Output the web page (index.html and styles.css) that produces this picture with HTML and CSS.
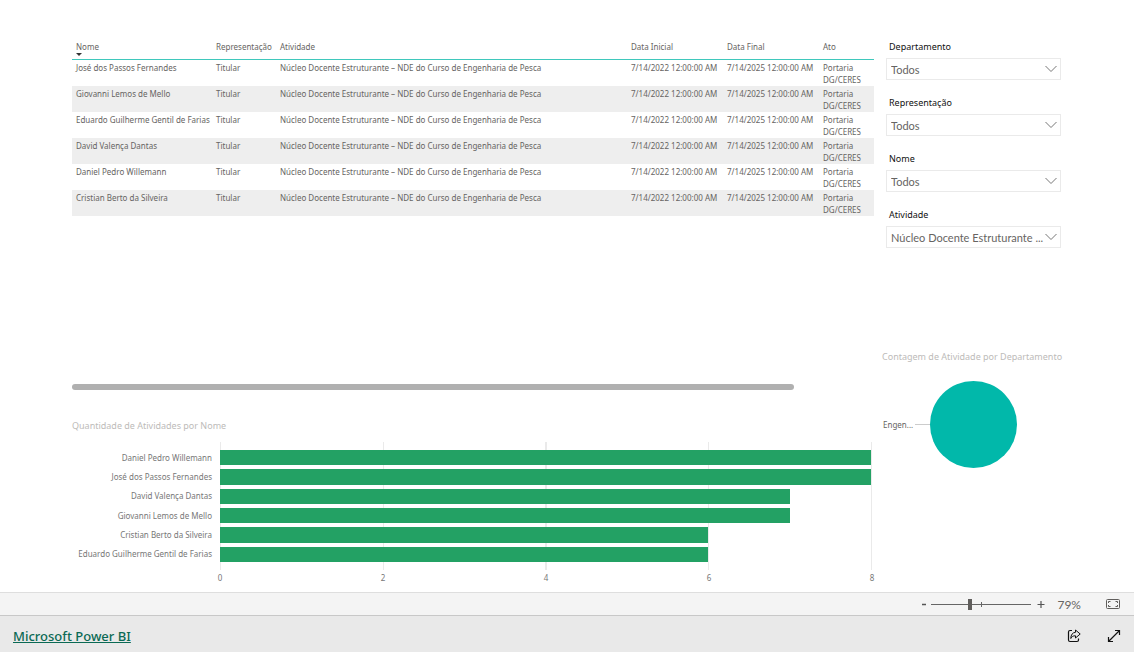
FILE: index.html
```html
<!DOCTYPE html>
<html lang="pt-BR">
<head>
<meta charset="utf-8">
<meta name="viewport" content="width=device-width, initial-scale=1">
<title>Microsoft Power BI</title>
<link rel="stylesheet" href="styles.css">
</head>
<body>
<main class="report">
  <div class="report-main">
    <section class="table-visual">
      <table class="data-table">
        <colgroup><col class="col-name"><col class="col-role"><col><col class="col-date"><col class="col-date"><col class="col-act"></colgroup>
        <thead>
          <tr><th class="sorted" aria-sort="descending">Nome</th><th>Representação</th><th>Atividade</th><th>Data Inicial</th><th>Data Final</th><th>Ato</th></tr>
        </thead>
        <tbody>
          <tr><td>José dos Passos Fernandes</td><td>Titular</td><td>Núcleo Docente Estruturante – NDE do Curso de Engenharia de Pesca</td><td>7/14/2022 12:00:00 AM</td><td>7/14/2025 12:00:00 AM</td><td>Portaria<br>DG/CERES</td></tr>
          <tr><td>Giovanni Lemos de Mello</td><td>Titular</td><td>Núcleo Docente Estruturante – NDE do Curso de Engenharia de Pesca</td><td>7/14/2022 12:00:00 AM</td><td>7/14/2025 12:00:00 AM</td><td>Portaria<br>DG/CERES</td></tr>
          <tr><td>Eduardo Guilherme Gentil de Farias</td><td>Titular</td><td>Núcleo Docente Estruturante – NDE do Curso de Engenharia de Pesca</td><td>7/14/2022 12:00:00 AM</td><td>7/14/2025 12:00:00 AM</td><td>Portaria<br>DG/CERES</td></tr>
          <tr><td>David Valença Dantas</td><td>Titular</td><td>Núcleo Docente Estruturante – NDE do Curso de Engenharia de Pesca</td><td>7/14/2022 12:00:00 AM</td><td>7/14/2025 12:00:00 AM</td><td>Portaria<br>DG/CERES</td></tr>
          <tr><td>Daniel Pedro Willemann</td><td>Titular</td><td>Núcleo Docente Estruturante – NDE do Curso de Engenharia de Pesca</td><td>7/14/2022 12:00:00 AM</td><td>7/14/2025 12:00:00 AM</td><td>Portaria<br>DG/CERES</td></tr>
          <tr><td>Cristian Berto da Silveira</td><td>Titular</td><td>Núcleo Docente Estruturante – NDE do Curso de Engenharia de Pesca</td><td>7/14/2022 12:00:00 AM</td><td>7/14/2025 12:00:00 AM</td><td>Portaria<br>DG/CERES</td></tr>
        </tbody>
      </table>
      <div class="scroll-thumb"></div>
    </section>

    <section class="bar-visual">
      <h2 class="visual-title">Quantidade de Atividades por Nome</h2>
      <div class="chart">
        <ul class="chart-names">
          <li>Daniel Pedro Willemann</li><li>José dos Passos Fernandes</li><li>David Valença Dantas</li><li>Giovanni Lemos de Mello</li><li>Cristian Berto da Silveira</li><li>Eduardo Guilherme Gentil de Farias</li>
        </ul>
        <div class="plot">
          <div class="bar" style="width:100%"></div>
          <div class="bar" style="width:100%"></div>
          <div class="bar" style="width:87.5%"></div>
          <div class="bar" style="width:87.5%"></div>
          <div class="bar" style="width:75%"></div>
          <div class="bar" style="width:75%"></div>
        </div>
        <div class="axis"><span>0</span><span>2</span><span>4</span><span>6</span><span>8</span></div>
      </div>
    </section>
  </div>

  <aside class="report-side">
    <div class="filters">
      <div class="filter">
        <label for="f-dep">Departamento</label>
        <div class="select-box"><select id="f-dep"><option>Todos</option></select><svg class="chevron" viewBox="0 0 12 8"><path d="M.5 1L6 6.500 11.500 1"/></svg></div>
      </div>
      <div class="filter">
        <label for="f-rep">Representação</label>
        <div class="select-box"><select id="f-rep"><option>Todos</option></select><svg class="chevron" viewBox="0 0 12 8"><path d="M.5 1L6 6.500 11.500 1"/></svg></div>
      </div>
      <div class="filter">
        <label for="f-nome">Nome</label>
        <div class="select-box"><select id="f-nome"><option>Todos</option></select><svg class="chevron" viewBox="0 0 12 8"><path d="M.5 1L6 6.500 11.500 1"/></svg></div>
      </div>
      <div class="filter">
        <label for="f-ativ">Atividade</label>
        <div class="select-box"><select id="f-ativ"><option>Núcleo Docente Estruturante ...</option></select><svg class="chevron" viewBox="0 0 12 8"><path d="M.5 1L6 6.500 11.500 1"/></svg></div>
      </div>
    </div>
    <section class="pie-visual">
      <h2 class="visual-title">Contagem de Atividade por Departamento</h2>
      <div class="pie-row"><span class="pie-label">Engen...</span><span class="pie-leader"></span><span class="pie"></span></div>
    </section>
  </aside>
</main>

<div class="zoom-bar">
  <button class="zoom-step" type="button" aria-label="Diminuir zoom"><svg width="6" height="12" viewBox="0 0 6 12"><path d="M1 6.500h4" stroke="#555" stroke-width="1.500"/></svg></button>
  <input class="zoom-range" type="range" min="0" max="100" value="38" aria-label="Zoom">
  <button class="zoom-step" type="button" aria-label="Aumentar zoom"><svg width="8" height="12" viewBox="0 0 8 12"><path d="M.5 6.500h7M4 3v7" stroke="#555" stroke-width="1.200"/></svg></button>
  <button class="zoom-value" type="button">79%</button>
  <button class="zoom-fit" type="button" aria-label="Ajustar à página"><svg width="14" height="12" viewBox="0 0 14 12" fill="none" stroke="#605e5c"><rect x=".5" y="1.500" width="13" height="9" rx="1"/><path d="M4.500 3.500h-2V5M9.500 3.500h2V5M4.500 8.500h-2V7M9.500 8.500h2V7"/></svg></button>
</div>

<footer class="brand-bar">
  <a class="brand-link" href="#">Microsoft Power BI</a>
  <div class="brand-actions">
    <button type="button" aria-label="Compartilhar"><svg width="14" height="14" viewBox="0 0 14 14" fill="none" stroke="#111" stroke-linejoin="round"><path stroke-width="1.200" d="M5 1.500H3Q1.500 1.500 1.500 3v8q0 1.500 1.500 1.500h7Q11.500 12.500 11.500 11V9.500"/><path d="M8.500 1l4.700 4-4.700 4V6.800C6 6.700 4.800 7.600 3.800 9.500 3.900 5.800 5.500 3.500 8.500 3.300z"/></svg></button>
    <button type="button" aria-label="Tela cheia"><svg width="14" height="14" viewBox="0 0 14 14" fill="none" stroke="#111" stroke-width="1.200"><path d="M1.500 12.500l11-11M8 1.500h4.500V6M1.500 8v4.500H6"/></svg></button>
  </div>
</footer>
</body>
</html>
```
FILE: styles.css
```css
* { box-sizing: border-box; }

body {
  margin: 0;
  min-height: 100vh;
  display: flex;
  flex-direction: column;
  background: #fff;
  color: #666462;
  font-family: "Noto Sans", "Open Sans", sans-serif;
  font-size: 8px;
  line-height: 12px;
}

button {
  display: flex;
  align-items: center;
  padding: 0;
  border: 0;
  background: none;
  color: inherit;
  font: inherit;
}

.report {
  flex: 1;
  display: grid;
  grid-template-columns: minmax(0, 1fr) 175px;
  gap: 12px;
  padding: 39px 73px 8px 72px;
}

.report-main { display: flex; flex-direction: column; }

.table-visual {
  display: flex;
  flex-direction: column;
  justify-content: space-between;
  min-height: 351px;
}

.data-table {
  width: 100%;
  table-layout: fixed;
  border-collapse: separate;
  border-spacing: 0;
}
.col-name { width: 140px; }
.col-role { width: 64px; }
.col-date { width: 96px; }
.col-act { width: 55px; }

.data-table th {
  height: 21px;
  padding: 2px 4px 0;
  border-bottom: 1px solid #3fc8bc;
  font-weight: 400;
  text-align: left;
  vertical-align: top;
  white-space: nowrap;
}
.data-table td {
  padding: 2px 4px 0;
  vertical-align: top;
  white-space: nowrap;
}
.data-table tbody tr:nth-child(even) { background: #eee; }
.sorted::after {
  content: "";
  display: block;
  width: 0;
  border: 3px solid transparent;
  border-top-color: #333;
  border-bottom: 0;
}

.scroll-thumb {
  width: 90%;
  height: 6px;
  border-radius: 3px;
  background: #b0b0b0;
}

.visual-title {
  margin: 0;
  color: #bdbbb9;
  font-size: 9px;
  font-weight: 400;
  line-height: 16px;
  white-space: nowrap;
}

.bar-visual { padding-top: 28px; }
.chart {
  display: grid;
  grid-template-columns: 148px 1fr;
  margin: 8px 2px 0 0;
}
.chart-names, .plot {
  display: grid;
  grid-template-rows: repeat(6, 1fr);
  height: 128px;
  padding: 6px 0;
}
.chart-names {
  margin: 0;
  padding-right: 8px;
  align-items: center;
  color: #777;
  list-style: none;
  text-align: right;
}
.plot {
  border-right: 1px solid #eaeaea;
  background: repeating-linear-gradient(to right, #eaeaea 0 1px, transparent 1px 25%);
}
.bar { margin: 2px 0; background: #23a164; }
.axis {
  grid-column: 2;
  display: flex;
  justify-content: space-between;
  margin: 2px -4px 0;
  color: #777;
}
.axis span { width: 8px; text-align: center; }

.filters { display: flex; flex-direction: column; gap: 15px; }
.filter label {
  display: block;
  padding: 0 3px;
  color: #111;
  font-size: 9px;
  line-height: 16px;
}
.select-box { position: relative; margin-top: 3px; }
.select-box select {
  display: block;
  width: 100%;
  height: 22px;
  padding: 0 16px 0 4px;
  border: 1px solid #eaeaea;
  border-radius: 0;
  appearance: none;
  background: #fff;
  color: #666462;
  font: 11px Lato, "Open Sans", sans-serif;
}
.chevron {
  position: absolute;
  top: 7px;
  right: 4px;
  width: 12px;
  height: 8px;
  fill: none;
  stroke: #777;
  pointer-events: none;
}

.pie-visual { margin-top: 101px; }
.pie-visual .visual-title { margin-left: -4px; }
.pie-row {
  display: flex;
  align-items: center;
  margin: 16px 0 0 -3px;
}
.pie-label { width: 32px; }
.pie-leader { width: 15px; height: 1px; background: #ccc; }
.pie { width: 87px; height: 87px; border-radius: 50%; background: #01b8aa; }

.zoom-bar {
  display: flex;
  align-items: center;
  justify-content: flex-end;
  height: 23px;
  padding-right: 14px;
  border-top: 1px solid #dedede;
  background: #f4f4f4;
}
.zoom-range {
  width: 100px;
  height: 12px;
  margin: 0 6px 0 4px;
  appearance: none;
  background:
    linear-gradient(#666, #666) 50px 50% / 1px 5px no-repeat,
    linear-gradient(#666, #666) 0 50% / 100% 1px no-repeat;
}
.zoom-range::-webkit-slider-thumb {
  appearance: none;
  width: 4px;
  height: 11px;
  background: #605e5c;
}
.zoom-value {
  margin: 0 25px 0 12px;
  font: 12px Lato, "Open Sans", sans-serif;
}

.brand-bar {
  display: flex;
  align-items: center;
  justify-content: space-between;
  height: 37px;
  padding: 4px 13px 0;
  border-top: 1px solid #c8c8c8;
  background: #e9e9e9;
}
.brand-link {
  color: #0b6a54;
  font-size: 13px;
  font-weight: 500;
  line-height: 20px;
}
.brand-actions { display: flex; gap: 26px; }
```
